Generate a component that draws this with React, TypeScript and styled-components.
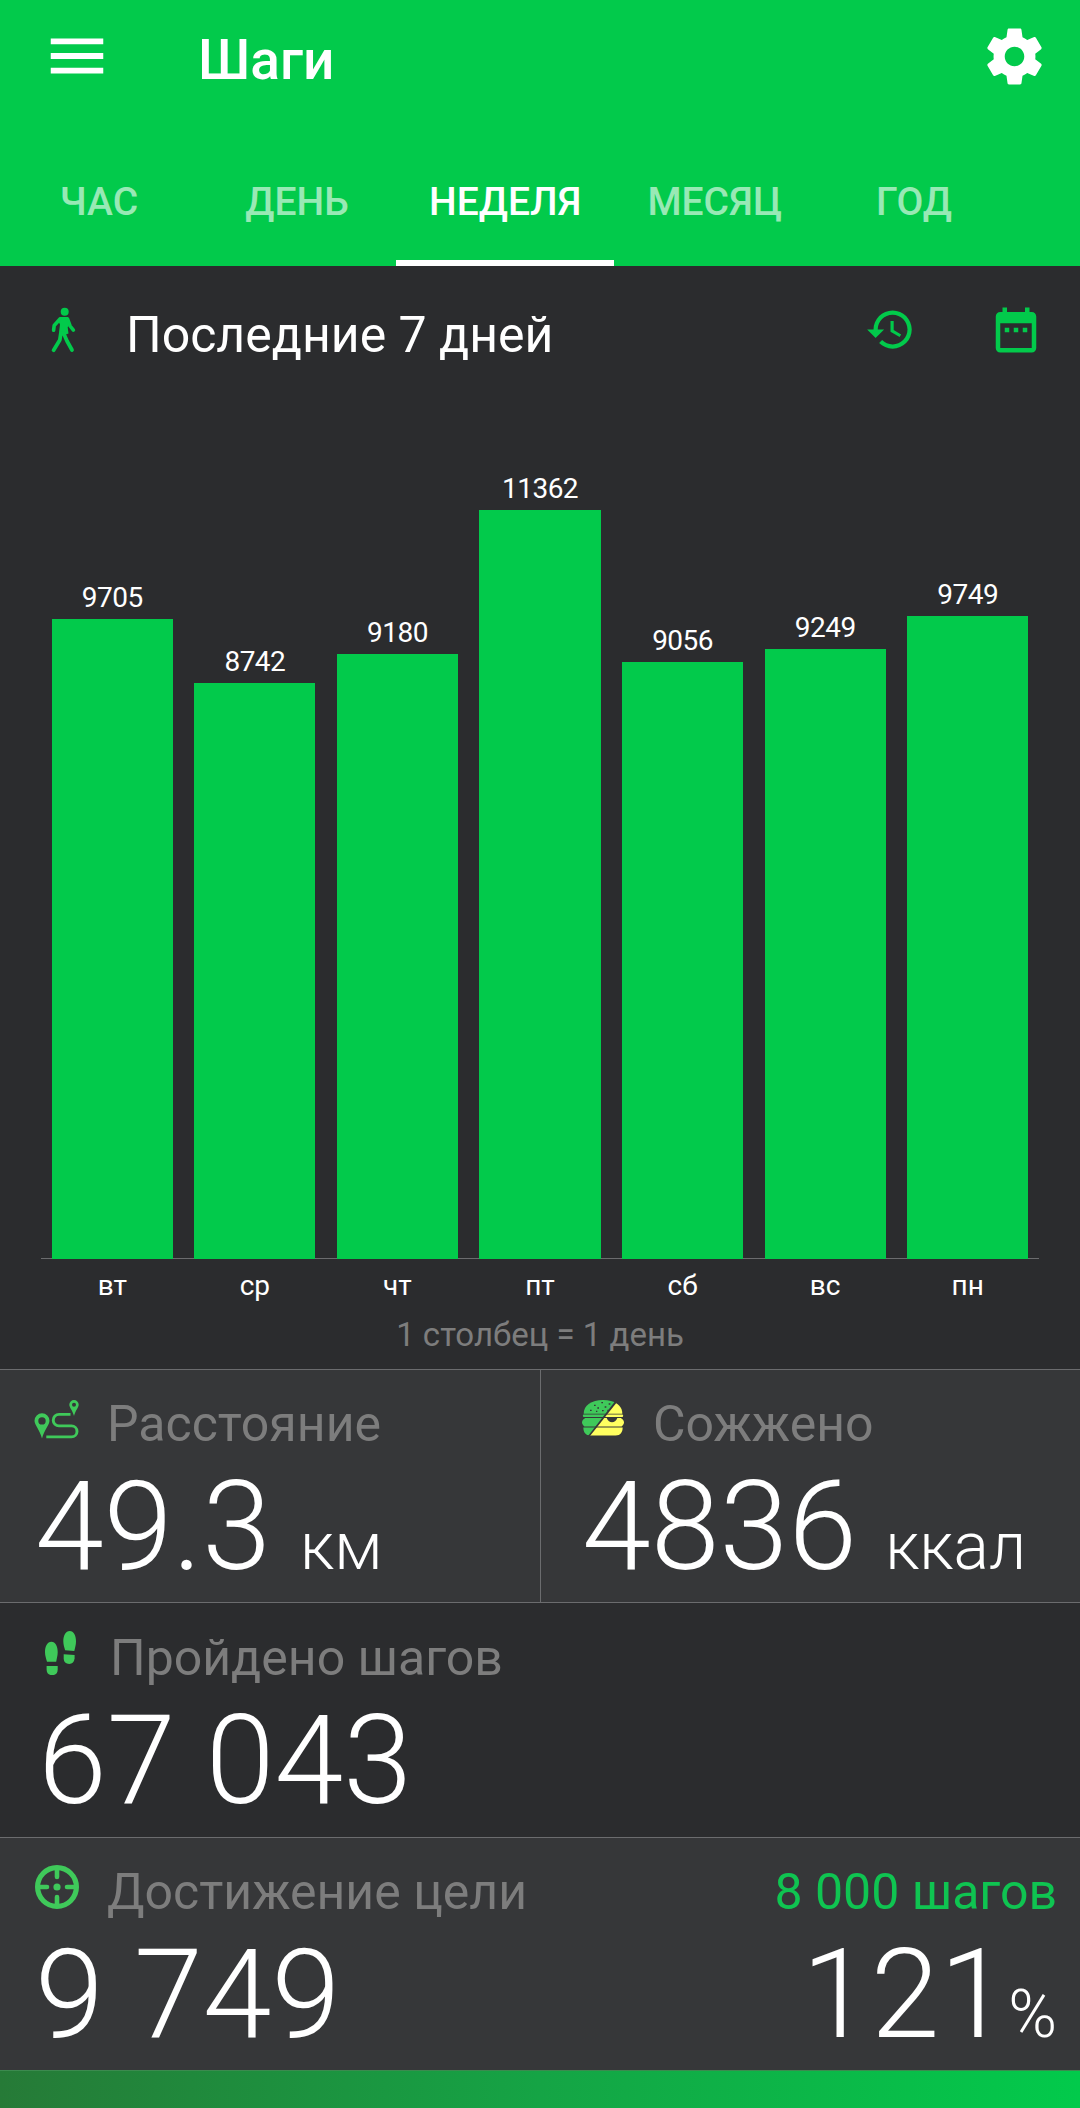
import React from "react";
import styled, { createGlobalStyle } from "styled-components";

const GREEN = "#02ca4b";
const DARK = "#2b2c2e";
const PANEL = "#363739";
const RULE = "#6b6c6e";
const MUTED = "#7d7d7d";
const ICON_GREEN = "#3fc95a";

const GlobalStyle = createGlobalStyle`
  * { box-sizing: border-box; }
  body {
    margin: 0;
    background: ${DARK};
    font-family: Roboto, "Noto Sans", sans-serif;
    color: #fff;
  }
  svg { display: block; flex: none; }
`;

const Screen = styled.div`
  width: 1080px;
  height: 2108px;
  display: flex;
  flex-direction: column;
  background: ${DARK};
  overflow: hidden;
`;

const Header = styled.header`
  height: 266px;
  background: ${GREEN};
  display: flex;
  flex-direction: column;
  justify-content: space-between;
`;

const AppBar = styled.div`
  display: flex;
  align-items: flex-start;
  padding: 20px 32px 0 42px;
`;

const Title = styled.h1`
  flex: 1;
  margin: 8px 0 0 86px;
  font-size: 55px;
  line-height: 64px;
  font-weight: 500;
`;

const GearSlot = styled.div`
  padding-top: 3px;
`;

const Tabs = styled.nav`
  display: flex;
  height: 132px;
`;

const Tab = styled.div<{ $active?: boolean }>`
  display: flex;
  justify-content: center;
  min-width: 198px;
  padding: 45px 33px 0;
  font-size: 39px;
  line-height: 46px;
  font-weight: 500;
  color: ${(p) => (p.$active ? "#fff" : "rgba(255, 255, 255, 0.6)")};
  border-bottom: 6px solid ${(p) => (p.$active ? "#fff" : "transparent")};
`;

const PeriodBar = styled.div`
  display: flex;
  align-items: flex-start;
  height: 142px;
  padding: 36px 37px 0 49px;
`;

const PeriodIcon = styled.div<{ $top: number; $left?: number }>`
  margin: ${(p) => p.$top}px 0 0 ${(p) => p.$left ?? 0}px;
`;

const PeriodTitle = styled.div`
  flex: 1;
  margin: 3px 0 0 47px;
  font-size: 50px;
  line-height: 60px;
`;

const Chart = styled.section`
  height: 961px;
  padding: 0 41px;
  display: flex;
  flex-direction: column;
`;

const Plot = styled.div`
  display: flex;
  align-items: flex-end;
  height: 851px;
  background: linear-gradient(${RULE}, ${RULE}) left bottom / 100% 1px no-repeat;
`;

const Column = styled.div`
  flex: 1;
  display: flex;
  flex-direction: column;
  align-items: center;
`;

const BarValue = styled.div`
  font-size: 28px;
  line-height: 34px;
  letter-spacing: -0.5px;
  margin-bottom: 4px;
`;

const Bar = styled.div`
  width: 85%;
  background: ${GREEN};
`;

const DayRow = styled.div`
  display: flex;
  padding-top: 10px;
`;

const Day = styled.div`
  flex: 1;
  text-align: center;
  font-size: 28px;
  line-height: 34px;
`;

const Caption = styled.div`
  margin-top: 12px;
  text-align: center;
  font-size: 33px;
  line-height: 40px;
  color: ${MUTED};
`;

const StatRow = styled.section<{ $height: number; $raised?: boolean; $columns?: string }>`
  display: grid;
  grid-template-columns: ${(p) => p.$columns ?? "1fr"};
  height: ${(p) => p.$height}px;
  border-top: 1px solid ${RULE};
  background: ${(p) => (p.$raised ? PANEL : DARK)};
`;

const Stat = styled.div<{ $left: number; $top?: number; $divided?: boolean }>`
  min-width: 0;
  padding: ${(p) => p.$top ?? 24}px 0 0 ${(p) => p.$left}px;
  border-left: ${(p) => (p.$divided ? `1px solid ${RULE}` : "0")};
`;

const StatHead = styled.div<{ $gap: number }>`
  display: flex;
  gap: ${(p) => p.$gap}px;
  height: 60px;
`;

const StatLabel = styled.div`
  font-size: 50px;
  line-height: 60px;
  color: ${MUTED};
  white-space: nowrap;
`;

const StatValue = styled.div<{ $indent?: number }>`
  margin: 3px 0 0 ${(p) => p.$indent ?? 0}px;
  font-size: 124px;
  line-height: 140px;
  font-weight: 300;
  white-space: nowrap;
`;

const Unit = styled.span<{ $gap: number }>`
  margin-left: ${(p) => p.$gap}px;
  font-size: 66px;
`;

const Goal = styled.div`
  padding: 24px 23px 0 0;
  text-align: right;
`;

const GoalTarget = styled(StatLabel)`
  color: #0fc451;
`;

const Progress = styled.div`
  height: 38px;
  border-top: 1px solid #3c8a4f;
  background: linear-gradient(90deg, #267a37, #15a445 50%, ${GREEN});
`;

const Gear = () => (
  <svg width="67" height="67" viewBox="0 0 24 24" fill="#fff">
    <path d="M19.43 12.98c.04-.32.07-.64.07-.98s-.03-.66-.07-.98l2.11-1.65c.19-.15.24-.42.12-.64l-2-3.46c-.12-.22-.39-.3-.61-.22l-2.49 1c-.52-.4-1.08-.73-1.69-.98l-.38-2.65C14.46 2.18 14.25 2 14 2h-4c-.25 0-.46.18-.49.42l-.38 2.65c-.61.25-1.17.59-1.69.98l-2.49-1c-.23-.09-.49 0-.61.22l-2 3.46c-.13.22-.07.49.12.64l2.11 1.65c-.04.32-.07.65-.07.98s.03.66.07.98l-2.11 1.65c-.19.15-.24.42-.12.64l2 3.46c.12.22.39.3.61.22l2.49-1c.52.4 1.08.73 1.69.98l.38 2.65c.03.24.24.42.49.42h4c.25 0 .46-.18.49-.42l.38-2.65c.61-.25 1.17-.59 1.69-.98l2.49 1c.23.09.49 0 .61-.22l2-3.46c.12-.22.07-.49-.12-.64l-2.11-1.65zM12 15.5c-1.93 0-3.5-1.57-3.5-3.5s1.57-3.5 3.5-3.5 3.5 1.57 3.5 3.5-1.57 3.5-3.5 3.5z" />
  </svg>
);

const Menu = () => (
  <svg width="70" height="71" viewBox="0 0 24 24" preserveAspectRatio="xMidYMax meet" fill="#fff">
    <path d="M3 18h18v-2H3v2zm0-5h18v-2H3v2zm0-7v2h18V6H3z" />
  </svg>
);

const Walker = () => (
  <svg width="30" height="46" viewBox="0 0 30 46" fill="none" stroke={GREEN} strokeLinecap="round" strokeLinejoin="round">
    <circle cx="15.7" cy="4.7" r="4" fill={GREEN} stroke="none" />
    <path d="M11 10h8l1.5 4-1.8 6.5.8 6-5.5 2-4-3 1-8-1.5-3z" fill={GREEN} stroke="none" />
    <path d="M11 12 5.2 18.5 4.6 23.3M18.500 12l2.600 7 3.300 4.200" strokeWidth="3.600" />
    <path d="M11.800 26.500 10.800 33 4.600 43.200M14.500 26l3.500 8L23 43" strokeWidth="3.800" />
  </svg>
);

const History = () => (
  <svg width="51" height="51" viewBox="0 0 24 24" fill={GREEN}>
    <path d="M13 3c-4.970 0-9 4.030-9 9H1l3.890 3.890.07.14L9 12H6c0-3.870 3.130-7 7-7s7 3.130 7 7-3.130 7-7 7c-1.930 0-3.680-.79-4.940-2.060l-1.420 1.420C8.270 19.990 10.510 21 13 21c4.970 0 9-4.030 9-9s-4.030-9-9-9zm-1 5v5l4.280 2.540.72-1.210-3.500-2.080V8H12z" />
  </svg>
);

const Calendar = () => (
  <svg width="54" height="54" viewBox="0 0 24 24" fill={GREEN}>
    <path d="M9 11H7v2h2v-2zm4 0h-2v2h2v-2zm4 0h-2v2h2v-2zm2-7h-1V2h-2v2H8V2H6v2H5c-1.110 0-1.990.9-1.990 2L3 20c0 1.100.89 2 2 2h14c1.100 0 2-.9 2-2V6c0-1.100-.9-2-2-2zm0 16H5V9h14v11z" />
  </svg>
);

const Route = () => (
  <svg width="46" height="60" viewBox="0 0 46 60" fill="none">
    <path d="M8 19.300a7.500 7.500 0 0 1 7.500 7.500c0 4.300-5 8.500-7.500 17.700C5.500 35.300.5 31.100.5 26.800A7.500 7.500 0 0 1 8 19.300zm0 3.900a3.700 3.700 0 1 0 0 7.400 3.700 3.700 0 0 0 0-7.400z" fill={ICON_GREEN} fillRule="evenodd" />
    <path d="M40 6a4.700 4.700 0 0 1 4.700 4.700c0 2.700-3.200 5.400-4.700 11.300-1.500-5.900-4.700-8.600-4.700-11.300A4.700 4.700 0 0 1 40 6zm0 2.700a2 2 0 1 0 0 4 2 2 0 0 0 0-4z" fill={ICON_GREEN} fillRule="evenodd" />
    <path d="M36.500 20.400H25a5.700 5.700 0 0 0 0 11.500h12.500a5.500 5.500 0 0 1 0 11H12.300" stroke={ICON_GREEN} strokeWidth="2.900" />
  </svg>
);

const BURGER_LAYERS = (
  <>
    <path d="M5 41C5 16 28 0 63 0s58 16 58 41z" />
    <rect x="3" y="43.500" width="120" height="7.500" rx="2" />
    <path d="M10 54h106c5 2 10 7 10 13 0 5-3 9-7 12.500H7c-4-3.500-7-7.500-7-12.500 0-6 5-11 10-13z" />
    <path d="M4 82.500h118c0 14-7 24-21 24H25C11 106.500 4 97 4 82.500z" />
  </>
);

const Burger = () => (
  <svg width="42" height="42" viewBox="0 -18 126 126">
    <clipPath id="burgerLeft"><path d="M0-2h104L18 108H0z" /></clipPath>
    <clipPath id="burgerRight"><path d="M107 4h20v104H24z" /></clipPath>
    <g fill={ICON_GREEN} clipPath="url(#burgerLeft)">{BURGER_LAYERS}</g>
    <g fill="#ffff60" clipPath="url(#burgerRight)">{BURGER_LAYERS}</g>
    <path d="M74 54h32q-6 13-16 13T74 54z" fill={PANEL} />
    <path d="M36 16h5M58 8h5M80 12h5M46 24h5M68 21h5M24 31h5M60 32h5M42 34h4M76 31h4" stroke={PANEL} strokeWidth="4" />
  </svg>
);

const Footprints = () => (
  <svg width="32" height="47" viewBox="0 -3 32 47" fill={ICON_GREEN}>
    <path d="M6.400 10.700c4 0 6.300 4.600 6.300 10.300 0 3.800-1 6.600-1.500 9.700H2C1.200 27.600 0 24.800 0 21c0-5.700 2.400-10.300 6.400-10.300z" />
    <path d="M1.600 35h11.100v3.500c0 3.600-2 5.700-5.500 5.700s-5.600-2.100-5.600-5.700z" />
    <path d="M24.700 0c4 0 6.300 4.600 6.300 10.300 0 3.800-1 6.600-1.700 9.700l-9.200-.7c-.6-2.800-1.800-5.200-1.800-9C18.300 4.600 20.700 0 24.700 0z" />
    <path d="m18.700 23.200 10.900.9v3.200c-.3 3.700-2.300 5.700-5.400 5.700-3.300 0-5.500-2.100-5.500-5.700z" />
  </svg>
);

const Target = () => (
  <svg width="44" height="47" viewBox="0 -3 44 47" fill="none" stroke={ICON_GREEN} strokeLinecap="round">
    <circle cx="22" cy="22" r="19.400" strokeWidth="5.200" />
    <path d="M22 4v8M22 32v8M4 22h8M32 22h8" strokeWidth="4.600" />
    <circle cx="22" cy="22" r="3.600" fill={ICON_GREEN} stroke="none" />
  </svg>
);

const DAYS = [
  { day: "вт", steps: 9705 },
  { day: "ср", steps: 8742 },
  { day: "чт", steps: 9180 },
  { day: "пт", steps: 11362 },
  { day: "сб", steps: 9056 },
  { day: "вс", steps: 9249 },
  { day: "пн", steps: 9749 },
];

const MAX_STEPS = 11362;
const MAX_BAR = 749;

const TABS = ["ЧАС", "ДЕНЬ", "НЕДЕЛЯ", "МЕСЯЦ", "ГОД"];

export default function App() {
  return (
    <>
      <GlobalStyle />
      <Screen>
        <Header>
          <AppBar>
            <Menu />
            <Title>Шаги</Title>
            <GearSlot><Gear /></GearSlot>
          </AppBar>
          <Tabs>
            {TABS.map((t) => (
              <Tab key={t} $active={t === "НЕДЕЛЯ"}>{t}</Tab>
            ))}
          </Tabs>
        </Header>

        <PeriodBar>
          <PeriodIcon $top={5}><Walker /></PeriodIcon>
          <PeriodTitle>Последние 7 дней</PeriodTitle>
          <PeriodIcon $top={2}><History /></PeriodIcon>
          <PeriodIcon $top={1} $left={73}><Calendar /></PeriodIcon>
        </PeriodBar>

        <Chart>
          <Plot>
            {DAYS.map(({ day, steps }) => (
              <Column key={day}>
                <BarValue>{steps}</BarValue>
                <Bar style={{ height: (steps / MAX_STEPS) * MAX_BAR }} />
              </Column>
            ))}
          </Plot>
          <DayRow>
            {DAYS.map(({ day }) => <Day key={day}>{day}</Day>)}
          </DayRow>
          <Caption>1 столбец = 1 день</Caption>
        </Chart>

        <StatRow $height={233} $raised $columns="1fr 1fr">
          <Stat $left={34}>
            <StatHead $gap={27}>
              <Route />
              <StatLabel>Расстояние</StatLabel>
            </StatHead>
            <StatValue $indent={1}>49.3<Unit $gap={29}>км</Unit></StatValue>
          </Stat>
          <Stat $left={41} $divided>
            <StatHead $gap={29}>
              <Burger />
              <StatLabel>Сожжено</StatLabel>
            </StatHead>
            <StatValue>4836<Unit $gap={28}>ккал</Unit></StatValue>
          </Stat>
        </StatRow>

        <StatRow $height={235}>
          <Stat $left={45} $top={25}>
            <StatHead $gap={33}>
              <Footprints />
              <StatLabel>Пройдено шагов</StatLabel>
            </StatHead>
            <StatValue $indent={-7}>67 043</StatValue>
          </Stat>
        </StatRow>

        <StatRow $height={233} $raised $columns="1fr auto">
          <Stat $left={35}>
            <StatHead $gap={28}>
              <Target />
              <StatLabel>Достижение цели</StatLabel>
            </StatHead>
            <StatValue>9 749</StatValue>
          </Stat>
          <Goal>
            <GoalTarget>8 000 шагов</GoalTarget>
            <StatValue>121<Unit $gap={0}>%</Unit></StatValue>
          </Goal>
        </StatRow>
        <Progress />
      </Screen>
    </>
  );
}
